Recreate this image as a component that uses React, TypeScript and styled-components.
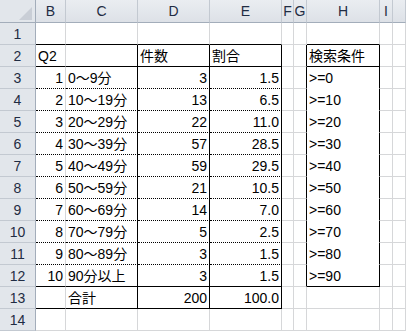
import React from "react";
import styled, { createGlobalStyle } from "styled-components";

const GlobalStyle = createGlobalStyle`
    html, body {
        margin: 0;
        padding: 0;
        background: #ffffff;
    }
    body {
        font-family: "Liberation Sans", "Noto Sans CJK JP", sans-serif;
    }
`;

const colors = {
    grid: "#d6d7d9",
    header: "#e2e6eb",
    headerSep: "#c3c9d1",
    headerEdge: "#a3adba",
    headerText: "#1f2c43",
    text: "#000000",
};

type Edge = "grid" | "solid" | "dotted" | "none";

const edge = (e: Edge) => {
    if (e === "solid") return "1px solid #000";
    if (e === "dotted") return "1px dotted #000";
    if (e === "none") return "1px solid #fff";
    return `1px solid ${colors.grid}`;
};

const Sheet = styled.div`
    display: grid;
    grid-template-columns: 36px 30px 72px 72px 72px 12px 13px 73px 13px 13px;
    grid-template-rows: 23px repeat(14, 22px);
    width: 406px;
    font-size: 14px;
    color: ${colors.text};
`;

const Corner = styled.div`
    position: relative;
    background: ${colors.header};
    border-right: 1px solid ${colors.headerEdge};
    border-bottom: 1px solid ${colors.headerEdge};
    box-sizing: border-box;

    svg {
        position: absolute;
        right: 3px;
        bottom: 2px;
    }
`;

const ColHead = styled.div`
    display: flex;
    align-items: center;
    justify-content: center;
    box-sizing: border-box;
    background: linear-gradient(#eaedf1, #dde1e7);
    border-right: 1px solid ${colors.headerSep};
    border-bottom: 1px solid ${colors.headerEdge};
    color: ${colors.headerText};
    line-height: 20px;
    overflow: hidden;
`;

const RowHead = styled.div`
    display: flex;
    align-items: center;
    justify-content: center;
    box-sizing: border-box;
    background: ${colors.header};
    border-right: 1px solid ${colors.headerEdge};
    border-bottom: 1px solid ${colors.headerSep};
    color: ${colors.headerText};
    line-height: 20px;
`;

const Cell = styled.div<{ $align?: "left" | "right"; $bottom: Edge; $right: Edge }>`
    display: flex;
    align-items: center;
    justify-content: ${(p) => (p.$align === "right" ? "flex-end" : "flex-start")};
    box-sizing: border-box;
    padding: 0 2px;
    border-bottom: ${(p) => edge(p.$bottom)};
    border-right: ${(p) => edge(p.$right)};
    line-height: 20px;
    white-space: nowrap;
    overflow: hidden;
`;

const cols = ["B", "C", "D", "E", "F", "G", "H", "I", ""];

const data = [
    { n: 1, label: "0～9分", count: 3, pct: "1.5", cond: ">=0" },
    { n: 2, label: "10～19分", count: 13, pct: "6.5", cond: ">=10" },
    { n: 3, label: "20～29分", count: 22, pct: "11.0", cond: ">=20" },
    { n: 4, label: "30～39分", count: 57, pct: "28.5", cond: ">=30" },
    { n: 5, label: "40～49分", count: 59, pct: "29.5", cond: ">=40" },
    { n: 6, label: "50～59分", count: 21, pct: "10.5", cond: ">=50" },
    { n: 7, label: "60～69分", count: 14, pct: "7.0", cond: ">=60" },
    { n: 8, label: "70～79分", count: 5, pct: "2.5", cond: ">=70" },
    { n: 9, label: "80～89分", count: 3, pct: "1.5", cond: ">=80" },
    { n: 10, label: "90分以上", count: 3, pct: "1.5", cond: ">=90" },
];

// c: 1=B ... 9=J
const content = (r: number, c: number): { text: string; align: "left" | "right" } => {
    if (r === 2) {
        const t: Record<number, string> = { 1: "Q2", 3: "件数", 4: "割合", 7: "検索条件" };
        return { text: t[c] ?? "", align: "left" };
    }
    if (r >= 3 && r <= 12) {
        const d = data[r - 3];
        if (c === 1) return { text: String(d.n), align: "right" };
        if (c === 2) return { text: d.label, align: "left" };
        if (c === 3) return { text: String(d.count), align: "right" };
        if (c === 4) return { text: d.pct, align: "right" };
        if (c === 7) return { text: d.cond, align: "left" };
    }
    if (r === 13) {
        if (c === 2) return { text: "合計", align: "left" };
        if (c === 3) return { text: "200", align: "right" };
        if (c === 4) return { text: "100.0", align: "right" };
    }
    return { text: "", align: "left" };
};

const bottomEdge = (r: number, c: number): Edge => {
    if (c >= 1 && c <= 4) {
        if (r === 1 || r === 2 || r === 12 || r === 13) return "solid";
        if (r >= 3 && r <= 11) return "dotted";
    }
    if (c === 7) {
        if (r === 1 || r === 2 || r === 12) return "solid";
        if (r >= 3 && r <= 11) return "none";
    }
    return "grid";
};

const rightEdge = (r: number, c: number): Edge => {
    if ((c === 2 || c === 3 || c === 4) && r >= 2 && r <= 13) return "solid";
    if ((c === 6 || c === 7) && r >= 2 && r <= 12) return "solid";
    return "grid";
};

const App = () => {
    const rows = Array.from({ length: 14 }, (_, i) => i + 1);

    return (
        <>
            <GlobalStyle />
            <Sheet>
                <Corner>
                    <svg width="13" height="13" viewBox="0 0 13 13">
                        <polygon points="13,0 13,13 0,13" fill="#c9ced6" />
                    </svg>
                </Corner>
                {cols.map((c, i) => (
                    <ColHead key={"h" + i}>{c}</ColHead>
                ))}
                {rows.map((r) => (
                    <React.Fragment key={r}>
                        <RowHead>{r}</RowHead>
                        {cols.map((_, i) => {
                            const c = i + 1;
                            const { text, align } = content(r, c);
                            return (
                                <Cell
                                    key={c}
                                    $align={align}
                                    $bottom={bottomEdge(r, c)}
                                    $right={rightEdge(r, c)}
                                >
                                    {text}
                                </Cell>
                            );
                        })}
                    </React.Fragment>
                ))}
            </Sheet>
        </>
    );
};

export default App;
